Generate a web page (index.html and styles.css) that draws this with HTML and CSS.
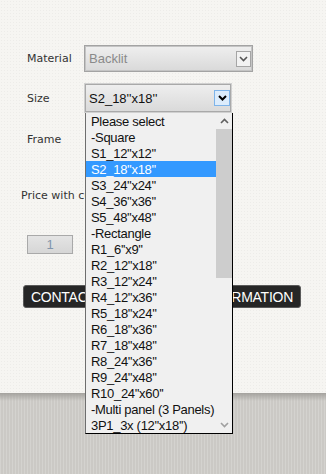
FILE: index.html
```html
<!DOCTYPE html>
<html lang="en">
<head>
  <meta charset="UTF-8">
  <meta name="viewport" content="width=device-width, initial-scale=1.0">
  <title>Product Options</title>
  <link rel="stylesheet" href="styles.css">
</head>
<body>

<div class="page">
  <div class="row">
    <label class="field-label">Material</label>
    <div class="select select-material">
      <span class="select-value muted">Backlit</span>
      <span class="select-arrow">
        <svg width="9" height="6" viewBox="0 0 9 6"><path d="M1 1 L4.5 4.5 L8 1" fill="none" stroke="#555" stroke-width="1.6"/></svg>
      </span>
    </div>
  </div>

  <div class="row row-size">
    <label class="field-label">Size</label>
    <div class="select select-size">
      <span class="select-value">S2_18''x18''</span>
      <span class="select-arrow arrow-focus">
        <svg width="9" height="6" viewBox="0 0 9 6"><path d="M1 1 L4.5 4.5 L8 1" fill="none" stroke="#000" stroke-width="2"/></svg>
      </span>

      <!-- open list of the size select -->
      <div class="dropdown">
        <ul class="dropdown-list">
          <li>Please select</li>
          <li>-Square</li>
          <li>S1_12''x12''</li>
          <li class="selected">S2_18''x18''</li>
          <li>S3_24''x24''</li>
          <li>S4_36''x36''</li>
          <li>S5_48''x48''</li>
          <li>-Rectangle</li>
          <li>R1_6''x9''</li>
          <li>R2_12''x18''</li>
          <li>R3_12''x24''</li>
          <li>R4_12''x36''</li>
          <li>R5_18''x24''</li>
          <li>R6_18''x36''</li>
          <li>R7_18''x48''</li>
          <li>R8_24''x36''</li>
          <li>R9_24''x48''</li>
          <li>R10_24''x60''</li>
          <li>-Multi panel (3 Panels)</li>
          <li>3P1_3x (12''x18'')</li>
        </ul>
        <div class="scrollbar">
          <span class="scroll-btn">
            <svg width="9" height="6" viewBox="0 0 9 6"><path d="M1 5 L4.5 1.5 L8 5" fill="none" stroke="#606060" stroke-width="1.6"/></svg>
          </span>
          <span class="scroll-track"><span class="scroll-thumb"></span></span>
          <span class="scroll-btn">
            <svg width="9" height="6" viewBox="0 0 9 6"><path d="M1 1 L4.5 4.5 L8 1" fill="none" stroke="#a0a0a0" stroke-width="1.6"/></svg>
          </span>
        </div>
      </div>
    </div>
  </div>

  <div class="row row-frame">
    <label class="field-label">Frame</label>
  </div>

  <p class="price">Price with customization</p>

  <input class="qty" type="text" value="1">

  <button class="contact">CONTACT US FOR MORE INFORMATION</button>
</div>

<div class="floor"></div>

</body>
</html>
```

FILE: styles.css
```css
body {
  margin: 0;
  padding: 0;
  font-family: "DejaVu Sans", Verdana, sans-serif;
  background-color: #cbc9c5;
}

.page {
  height: 393px;
  box-sizing: border-box;
  padding: 45px 0 0 27px;
  background-color: #f6f5f2;
  background-image: radial-gradient(rgba(0, 0, 0, 0.035) 1px, transparent 1px);
  background-size: 3px 3px;
}

.row {
  display: flex;
  align-items: center;
  height: 27px;
}

.row-size {
  height: 30px;
  margin-top: 11px;
}

.row-frame {
  margin-top: 13px;
}

.field-label {
  width: 57px;
  font-size: 11px;
  color: #333;
}

.select {
  position: relative;
  display: flex;
  align-items: center;
  box-sizing: border-box;
  height: 100%;
  font-family: "Liberation Sans", Arial, sans-serif;
  font-size: 13px;
  background: linear-gradient(#efefef, #d9d9d9);
}

.select-material {
  width: 169px;
  border: 1px solid #a3a3a3;
  box-shadow: inset 0 0 0 1px #c4c4c4;
}

.select-size {
  width: 148px;
  border: 1px solid #d0d0d0;
  box-shadow: inset 0 0 0 1px #a9a9a9;
}

.select-value {
  flex: 1;
  padding-left: 4px;
  color: #111;
}

.select-value.muted {
  color: #8a8a8a;
}

.select-arrow {
  display: flex;
  align-items: center;
  justify-content: center;
  width: 15px;
  height: 16px;
  margin-right: 1px;
  box-sizing: border-box;
  background: #f2f2f2;
  border: 1px solid #a5a5a5;
}

.arrow-focus {
  width: 16px;
  background: #dcecfc;
  border-color: #7eb4ea;
}

.dropdown {
  position: absolute;
  top: calc(100% + 1px);
  left: 0;
  display: flex;
  width: 148px;
  height: 321px;
  box-sizing: border-box;
  background: #f0f0f0;
  border-left: 1px solid #6e6e6e;
  border-right: 1px solid #000;
  border-bottom: 1px solid #000;
  z-index: 5;
}

.dropdown-list {
  list-style: none;
  margin: 0;
  padding: 0;
  width: 130px;
}

.dropdown-list li {
  height: 16px;
  line-height: 17px;
  padding-left: 5px;
  font-size: 13px;
  letter-spacing: -0.3px;
  color: #111;
  white-space: nowrap;
  overflow: hidden;
}

.dropdown-list li.selected {
  background: #3399ff;
  color: #fff;
}

.scrollbar {
  display: flex;
  flex-direction: column;
  width: 16px;
}

.scroll-btn {
  display: flex;
  align-items: center;
  justify-content: center;
  height: 16px;
}

.scroll-track {
  flex: 1;
}

.scroll-thumb {
  display: block;
  height: 149px;
  background: #cdcdcd;
}

.price {
  margin: 35px 0 0 -6px;
  font-size: 11px;
  line-height: 16px;
  color: #333;
}

.qty {
  display: block;
  margin-top: 31px;
  width: 46px;
  height: 19px;
  box-sizing: border-box;
  padding: 0;
  text-align: center;
  font-family: "Liberation Sans", Arial, sans-serif;
  font-size: 13px;
  color: #8195ab;
  background: linear-gradient(#e4e4e4, #d6d6d6);
  border: 1px solid #a9a9a9;
}

.contact {
  display: block;
  margin: 31px 0 0 -4px;
  width: 278px;
  height: 23px;
  padding: 0;
  font-family: "Liberation Sans", Arial, sans-serif;
  font-size: 14px;
  letter-spacing: -0.25px;
  color: #fff;
  background-color: #262626;
  border: 1px solid #5a5a5a;
  border-radius: 3px;
  cursor: pointer;
}

.floor {
  height: 81px;
  background-color: #cbc9c5;
  background-image:
    linear-gradient(#a4a29e, rgba(203, 201, 197, 0) 8px),
    repeating-linear-gradient(90deg, rgba(255, 255, 255, 0.18) 0 1px, transparent 1px 3px);
}
```
